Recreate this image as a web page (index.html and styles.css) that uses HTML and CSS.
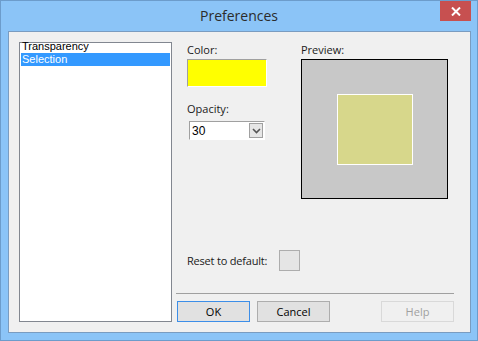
FILE: index.html
```html
<!DOCTYPE html>
<html lang="en">
<head>
    <meta charset="UTF-8">
    <title>Preferences</title>
    <link rel="stylesheet" href="styles.css">
</head>
<body>
    <div class="window">
        <div class="titlebar">
            <span class="title">Preferences</span>
            <div class="close-btn">
                <svg width="10" height="9" viewBox="0 0 10 9">
                    <path d="M1 0.5 L9 8.5 M9 0.5 L1 8.5" stroke="#fff" stroke-width="2"/>
                </svg>
            </div>
        </div>
        <div class="client">
            <div class="listbox">
                <div class="list-item first">Transparency</div>
                <div class="list-item selected">Selection</div>
            </div>
            <div class="panel">
                <div class="settings">
                    <div class="col-left">
                        <div class="label">Color:</div>
                        <div class="swatch"></div>
                        <div class="label opacity-label">Opacity:</div>
                        <div class="combo">
                            <span class="combo-value">30</span>
                            <span class="combo-arrow">
                                <svg width="9" height="6" viewBox="0 0 9 6">
                                    <path d="M1 1 L4.5 4.5 L8 1" stroke="#555" stroke-width="1.6" fill="none"/>
                                </svg>
                            </span>
                        </div>
                    </div>
                    <div class="col-right">
                        <div class="label">Preview:</div>
                        <div class="preview">
                            <div class="preview-inner"></div>
                        </div>
                    </div>
                </div>
                <div class="reset-row">
                    <span class="label reset-label">Reset to default:</span>
                    <div class="reset-btn"></div>
                </div>
                <div class="separator"></div>
                <div class="buttons">
                    <button class="btn btn-default">OK</button>
                    <button class="btn">Cancel</button>
                    <button class="btn btn-disabled">Help</button>
                </div>
            </div>
        </div>
    </div>
</body>
</html>
```

FILE: styles.css
```css
body {
    margin: 0;
    font-family: "Open Sans", "Noto Sans", sans-serif;
    font-size: 11px;
    color: #000;
}
.window {
    width: 478px;
    height: 341px;
    box-sizing: border-box;
    background: #8bc4f7;
    border: 1px solid #6c9ccb;
    display: flex;
    flex-direction: column;
}
.titlebar {
    position: relative;
    height: 30px;
    display: flex;
    align-items: center;
    justify-content: center;
}
.title {
    font-size: 14px;
    color: #2b2b2b;
    margin-top: -1px;
}
.close-btn {
    position: absolute;
    top: 0;
    right: 6px;
    width: 31px;
    height: 20px;
    background: #c75050;
    display: flex;
    align-items: center;
    justify-content: center;
}
.client {
    flex: 1;
    margin: 0 6px 7px 7px;
    background: #f0f0f0;
    border: 1px solid #7a9cc0;
    display: flex;
    padding: 10px 16px 10px 10px;
}
.listbox {
    width: 149px;
    background: #fff;
    border: 1px solid #828790;
    padding: 0 1px;
    font-family: "Liberation Sans", Arial, sans-serif;
    font-size: 11px;
}
.list-item {
    height: 13px;
    line-height: 13px;
    padding-left: 1px;
}
.list-item.first {
    height: 10px;
    line-height: 7px;
}
.list-item.selected {
    background: #3399ff;
    color: #fff;
}
.panel {
    width: 278px;
    margin-left: 4px;
    display: flex;
    flex-direction: column;
}
.settings {
    display: flex;
    padding-left: 11px;
}
.col-left {
    width: 114px;
}
.label {
    line-height: 16px;
    height: 16px;
    color: #1a1a1a;
}
.swatch {
    margin-top: 1px;
    width: 78px;
    height: 26px;
    background: #ffff00;
    border: 1px solid;
    border-color: #a0a0a0 #fff #fff #a0a0a0;
}
.opacity-label {
    margin-top: 14px;
}
.combo {
    margin-top: 4px;
    margin-left: 2px;
    width: 74px;
    height: 17px;
    background: #fff;
    border: 1px solid;
    border-color: #a0a0a0 #fff #fff #a0a0a0;
    display: flex;
    align-items: center;
    justify-content: space-between;
}
.combo-value {
    padding-left: 2px;
    font-family: "Liberation Sans", Arial, sans-serif;
    font-size: 12px;
}
.combo-arrow {
    width: 14px;
    height: 15px;
    box-sizing: border-box;
    border: 1px solid #a0a0a0;
    background: #e6e6e6;
    display: flex;
    align-items: center;
    justify-content: center;
    margin-right: 1px;
}
.preview {
    margin-top: 1px;
    width: 145px;
    height: 138px;
    background: #c8c8c8;
    border: 1px solid #000;
    display: flex;
    align-items: center;
    justify-content: center;
}
.preview-inner {
    width: 74px;
    height: 69px;
    background: #d7d78b;
    border: 1px solid #fff;
}
.reset-row {
    margin-top: auto;
    padding-left: 11px;
    display: flex;
    align-items: center;
}
.reset-label {
    width: 81px;
    margin-right: 11px;
    letter-spacing: -0.2px;
    white-space: nowrap;
}
.reset-btn {
    width: 19px;
    height: 19px;
    background: #e5e5e5;
    border: 1px solid #adadad;
}
.separator {
    margin-top: 22px;
    height: 1px;
    background: #a0a0a0;
}
.buttons {
    margin-top: 7px;
    padding-left: 1px;
    display: flex;
}
.btn {
    width: 73px;
    height: 21px;
    font-family: inherit;
    font-size: 11px;
    background: #e1e1e1;
    border: 1px solid #adadad;
    padding: 0;
    margin-right: 7px;
    color: #000;
}
.btn-default {
    border-color: #3c8ee8;
}
.btn-disabled {
    margin: 0 0 0 auto;
    background: #f0f0f0;
    border-color: #d9d9d9;
    color: #a0a0a0;
}
```
